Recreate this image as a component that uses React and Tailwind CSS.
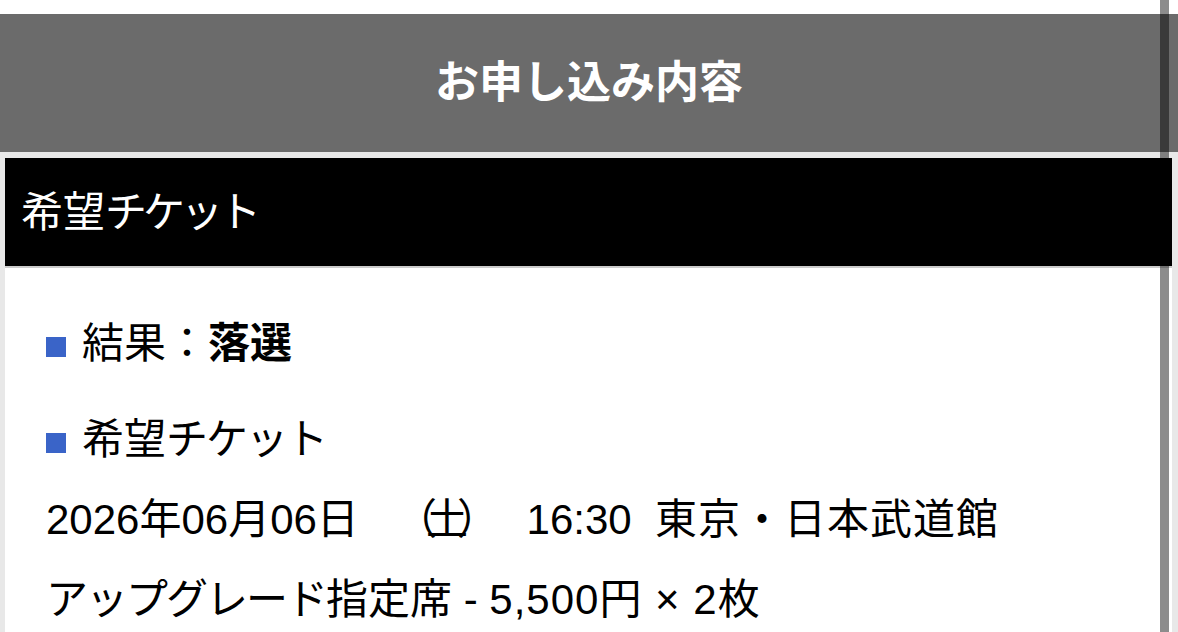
const font = {
  fontFamily: '"Liberation Sans", "Noto Sans CJK JP", sans-serif',
};

const Bullet = () => (
  <span className="inline-block w-[20px] h-[20px] bg-[#3a64c8] mr-[16px] align-middle" />
);

// katakana runs a touch tighter than the kanji around them
const Kana = ({ children, wide }) => (
  <span className={wide ? "tracking-[-4px]" : "tracking-[-2px]"}>{children}</span>
);

const App = () => (
  <div lang="ja" className="relative h-[632px] overflow-hidden bg-white pt-[14px] text-black [text-spacing-trim:space-all]" style={font}>
    <header className="h-[138px] bg-[#6b6b6b] flex items-center justify-center">
      <h1 className="text-[44px] font-bold text-white">お申し込み内容</h1>
    </header>

    <section className="bg-[#e8e8e8] pt-[6px] pl-[5px] pr-[6px]">
      <h2 className="h-[108px] bg-black flex items-center pl-[16px] text-[42px] text-white border-b-[2px] border-[#cccccc] box-content">
        <span>
          希望<Kana wide>チケット</Kana>
        </span>
      </h2>
      <div className="bg-white pt-[36px] pl-[41px] pb-[20px] text-[42px] leading-[80px]">
        <p>
          <Bullet />
          結果：<span className="font-bold">落選</span>
        </p>
        <p className="mt-[16px]">
          <Bullet />
          希望<Kana>チケット</Kana>
        </p>
        <p>
          2026年06月06日<span className="pl-[36px] pr-[27px] tracking-[-11px]">（土）</span>&nbsp;16:30&nbsp;&nbsp;
          <span className="tracking-[1px]">東京・日本武道館</span>
        </p>
        <p>
          <Kana>アップグレード</Kana>指定席 - <span className="tracking-[1px]">5,500円 × 2</span>枚
        </p>
      </div>
    </section>

    {/* scroll indicator laid over the page */}
    <div className="absolute top-0 bottom-0 left-[1160px] w-[9px] bg-black/45" />
  </div>
);

export default App;
